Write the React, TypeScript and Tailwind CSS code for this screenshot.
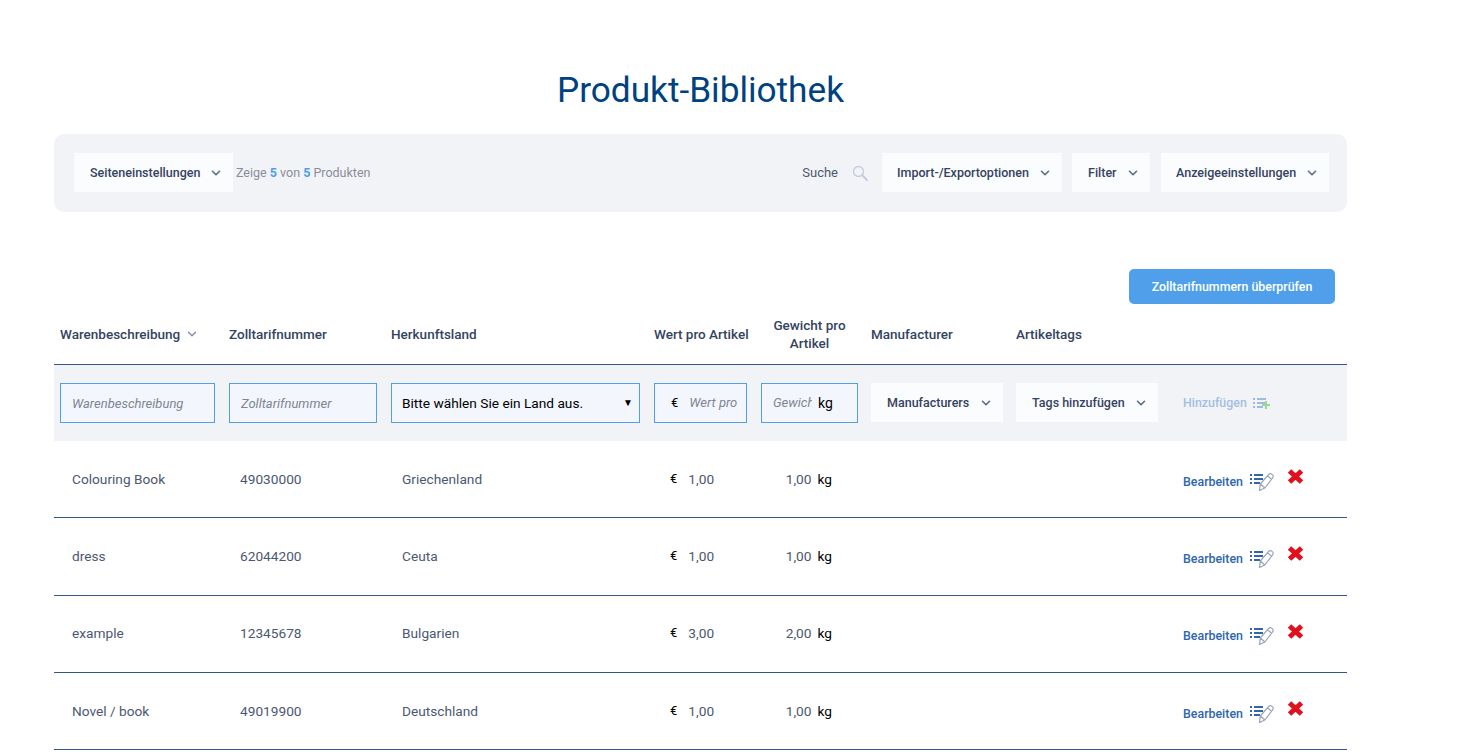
import { ChevronDown } from "lucide-react";

const grid = "grid grid-cols-[169px_162px_263px_107px_110px_145px_167px_1fr] px-[6px]";

const products = [
  { name: "Colouring Book", code: "49030000", country: "Griechenland", value: "1,00", weight: "1,00" },
  { name: "dress", code: "62044200", country: "Ceuta", value: "1,00", weight: "1,00" },
  { name: "example", code: "12345678", country: "Bulgarien", value: "3,00", weight: "2,00" },
  { name: "Novel / book", code: "49019900", country: "Deutschland", value: "1,00", weight: "1,00" },
];

function Dropdown({ label, className }: { label: string; className: string }) {
  return (
    <button className={`flex items-center justify-between bg-[#fbfcfe] text-[12.5px] font-medium text-[#34435f] ${className}`}>
      <span className="pt-[2px]">{label}</span>
      <ChevronDown size={14} strokeWidth={2.8} className="text-[#5b6b88]" />
    </button>
  );
}

function SearchIcon() {
  return (
    <svg width="16" height="16" viewBox="0 0 16 16" fill="none">
      <circle cx="6.5" cy="6.5" r="5" stroke="#c3cbdf" strokeWidth="1.3" />
      <path d="M10.3 10.3L15 15" stroke="#c3cbdf" strokeWidth="2" strokeLinecap="round" />
    </svg>
  );
}

function ListIcon({ color }: { color: string }) {
  return (
    <g fill={color}>
      <rect x="0" y="1" width="2" height="2" />
      <rect x="4" y="1" width="9" height="2" />
      <rect x="0" y="5" width="2" height="2" />
      <rect x="4" y="5" width="9" height="2" />
      <rect x="0" y="9" width="2" height="2" />
      <rect x="4" y="9" width="6" height="2" />
    </g>
  );
}

function AddIcon() {
  return (
    <svg width="17" height="12" viewBox="0 0 17 12">
      <ListIcon color="#9dbbe0" />
      <path d="M9 8h8M13 4v8" stroke="#9bd89b" strokeWidth="2" />
    </svg>
  );
}

function EditIcon() {
  return (
    <svg width="25" height="18" viewBox="0 0 25 18" fill="none">
      <ListIcon color="#2f66ad" />
      <path
        d="M9.5 17.5l.8-6.5L18.5 1.6c.9-1 2.5-1.1 3.6-.2s1.3 2.5.4 3.6L14.8 15l-5.3 2.5zM10.3 11l4.5 4M17.5 2.8l4.5 3.8"
        stroke="#98a4b8"
        strokeWidth="1.2"
        strokeLinejoin="round"
        fill="#ffffff"
      />
    </svg>
  );
}

function DeleteIcon() {
  return (
    <svg width="17" height="15" viewBox="0 0 17 15">
      <path d="M2.5 2L14.5 13M14.5 2L2.5 13" stroke="#e2101c" strokeWidth="5" />
    </svg>
  );
}

export default function App() {
  return (
    <div className="h-screen overflow-hidden bg-white pl-[54px] font-['Roboto',sans-serif]">
      <div className="w-[1293px]">
        <h1 className="pt-[68px] text-center text-[35.2px] leading-[44px] text-[#004180]">Produkt-Bibliothek</h1>

        {/* Toolbar */}
        <div className="mt-[22px] flex h-[78px] items-center justify-between rounded-[10px] bg-[#f2f3f7] pl-[20px] pr-[18px]">
          <div className="flex items-center">
            <Dropdown label="Seiteneinstellungen" className="-mt-[1px] h-[39px] w-[159px] pl-[16px] pr-[10px]" />
            <span className="ml-[3px] text-[12.5px] text-[#8a8d9c]">
              Zeige <b className="font-bold text-[#4f9fea]">5</b> von <b className="font-bold text-[#4f9fea]">5</b> Produkten
            </span>
          </div>
          <div className="flex items-center">
            <span className="text-[13px] text-[#4c5870]">Suche</span>
            <span className="ml-[14px] mr-[14px]"><SearchIcon /></span>
            <Dropdown label="Import-/Exportoptionen" className="-mt-[1px] h-[39px] w-[180px] pl-[15px] pr-[10px]" />
            <Dropdown label="Filter" className="-mt-[1px] ml-[10px] h-[39px] w-[78px] pl-[16px] pr-[10px]" />
            <Dropdown label="Anzeigeeinstellungen" className="-mt-[1px] ml-[11px] h-[39px] w-[168px] pl-[15px] pr-[10px]" />
          </div>
        </div>

        <div className="mt-[57px] flex justify-end pr-[12px]">
          <button className="h-[35px] w-[206px] rounded-[5px] bg-[#4f9fea] pt-[1px] text-[12.4px] font-medium text-white">
            Zolltarifnummern überprüfen
          </button>
        </div>

        {/* Table head */}
        <div className={`${grid} h-[61px] items-center border-b border-[#33578c] text-[13.5px] font-medium leading-[18px] text-[#34435f]`}>
          <div className="flex items-center gap-[5px]">
            Warenbeschreibung
            <ChevronDown size={14} strokeWidth={2.2} className="text-[#7d8aa0]" />
          </div>
          <div>Zolltarifnummer</div>
          <div>Herkunftsland</div>
          <div>Wert pro Artikel</div>
          <div className="w-[97px] text-center">Gewicht pro Artikel</div>
          <div>Manufacturer</div>
          <div>Artikeltags</div>
          <div />
        </div>

        {/* Add row */}
        <div className={`${grid} h-[76px] items-center bg-[#f2f3f7]`}>
          <input
            placeholder="Warenbeschreibung"
            className="h-[40px] w-[155px] border border-[#4f9fea] bg-[#f3f6fd] px-[11px] text-[13px] italic placeholder:text-[#7f8592]"
          />
          <input
            placeholder="Zolltarifnummer"
            className="h-[40px] w-[148px] border border-[#4f9fea] bg-[#f3f6fd] px-[11px] text-[13px] italic placeholder:text-[#7f8592]"
          />
          <div className="relative h-[40px] w-[249px] border border-[#4f9fea] bg-[#f3f6fd] pl-[10px] text-[13.7px] leading-[38px] text-black">
            Bitte wählen Sie ein Land aus.
            <span className="absolute right-[6px] top-0 text-[10px] text-black">▼</span>
          </div>
          <div className="flex h-[40px] w-[93px] items-center border border-[#4f9fea] bg-[#f3f6fd] pl-[16px] text-[13px] text-black">
            €
            <input placeholder="Wert pro Artikel" className="ml-[11px] w-[48px] text-[13px] italic placeholder:text-[#7f8592]" />
          </div>
          <div className="flex h-[40px] w-[97px] items-center border border-[#4f9fea] bg-[#f3f6fd] pl-[11px] text-[14px] text-black">
            <input placeholder="Gewicht pro Artikel" className="w-[39px] text-[13px] italic placeholder:text-[#7f8592]" />
            <span className="ml-[6px]">kg</span>
          </div>
          <Dropdown label="Manufacturers" className="h-[39px] w-[132px] self-start mt-[18px] pl-[16px] pr-[10px]" />
          <Dropdown label="Tags hinzufügen" className="h-[39px] w-[142px] self-start mt-[18px] pl-[16px] pr-[10px]" />
          <div className="flex items-center gap-[6px] text-[12.4px] font-medium text-[#a4bfdf]">
            Hinzufügen
            <AddIcon />
          </div>
        </div>

        {/* Rows */}
        {products.map((p) => (
          <div key={p.code} className={`${grid} h-[77.3px] items-center border-b border-[#33578c] text-[13.7px] text-[#4c5870]`}>
            <div className="pl-[12px]">{p.name}</div>
            <div className="pl-[11px]">{p.code}</div>
            <div className="pl-[11px]">{p.country}</div>
            <div className="flex pl-[16px]">
              <span className="text-[13px] text-black">€</span>
              <span className="ml-[11px]">{p.value}</span>
            </div>
            <div className="flex w-[97px] justify-end pr-[26px]">
              {p.weight}
              <span className="ml-[6px] text-black">kg</span>
            </div>
            <div />
            <div />
            <div className="flex items-center text-[12.4px] font-medium text-[#2f66ad]">
              <span className="mt-[6px]">Bearbeiten</span>
              <span className="ml-[7px] mt-[5px]"><EditIcon /></span>
              <span className="ml-[12px] -mt-[5px]"><DeleteIcon /></span>
            </div>
          </div>
        ))}
      </div>
    </div>
  );
}
